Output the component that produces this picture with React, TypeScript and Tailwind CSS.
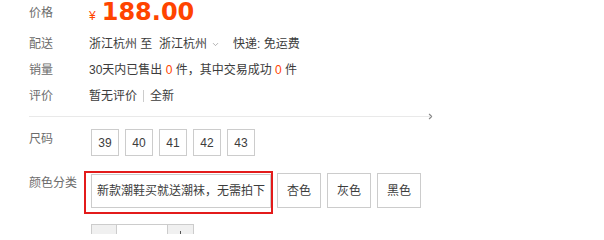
import { ChevronRight, ChevronDown } from "lucide-react"

const font = { fontFamily: '"Liberation Sans", "Noto Sans CJK SC", sans-serif' }

const sizes = ["39", "40", "41", "42", "43"]
const colors = ["杏色", "灰色", "黑色"]

function Label({ children }: { children: React.ReactNode }) {
  return <div className="w-[60px] shrink-0 text-[#6c6c6c]">{children}</div>
}

export default function App() {
  return (
    <div className="h-[234px] w-[604px] overflow-hidden bg-white pl-[29px] text-[12px] text-[#3c3c3c]" style={font}>
      {/* Price */}
      <div className="flex h-[25px] items-center">
        <Label>价格</Label>
        <div className="flex items-baseline text-[#f40]">
          <span className="mr-[6px] text-[12px]">¥</span>
          <span className="text-[24px] font-bold leading-[25px]" style={{ fontFamily: '"DejaVu Sans", sans-serif' }}>
            188.00
          </span>
        </div>
      </div>

      {/* Delivery */}
      <div className="mt-[6px] flex h-[26px] items-center">
        <Label>配送</Label>
        <span className="whitespace-pre">浙江杭州 至  浙江杭州</span>
        <ChevronDown className="ml-[4px] h-[9px] w-[9px] text-[#999]" strokeWidth={2} />
        <span className="ml-[13px]">快递: 免运费</span>
      </div>

      {/* Sales */}
      <div className="flex h-[26px] items-center">
        <Label>销量</Label>
        <span>
          30天内已售出 <span className="text-[#f40]">0</span> 件，其中交易成功 <span className="text-[#f40]">0</span> 件
        </span>
      </div>

      {/* Reviews */}
      <div className="flex h-[26px] items-center">
        <Label>评价</Label>
        <span>暂无评价</span>
        <span className="mx-[6px] h-[12px] w-px bg-[#ccc]" />
        <span>全新</span>
      </div>

      {/* Divider */}
      <div className="relative mt-[7px] h-px w-[401px] bg-[#e9e9e9]">
        <ChevronRight className="absolute -right-[5px] -top-[4px] h-[9px] w-[9px] text-[#888]" strokeWidth={3} />
      </div>

      {/* Size */}
      <div className="mt-[12px] flex items-start">
        <div className="w-[60px] shrink-0 leading-[20px] text-[#6c6c6c]">尺码</div>
        <div className="ml-[2px] flex gap-[6px]">
          {sizes.map((s) => (
            <div key={s} className="flex h-[27px] w-[28px] items-center justify-center border border-[#ccc]">
              {s}
            </div>
          ))}
        </div>
      </div>

      {/* Color */}
      <div className="mt-[17px] flex items-start">
        <div className="w-[60px] shrink-0 leading-[20px] text-[#6c6c6c]">颜色分类</div>
        <div className="ml-[2px] flex gap-[6px]">
          <div className="relative mt-[1px] flex h-[34px] w-[180px] items-center justify-center border border-[#ccc]">
            新款潮鞋买就送潮袜，无需拍下
            <div className="absolute -bottom-[7px] -left-[8px] -right-[3px] -top-[4px] border-2 border-[#e31b1b]" />
          </div>
          {colors.map((c) => (
            <div key={c} className="flex h-[35px] w-[44px] items-center justify-center border border-[#ccc]">
              {c}
            </div>
          ))}
        </div>
      </div>

      {/* Quantity */}
      <div className="mt-[16px] flex items-start">
        <div className="w-[60px] shrink-0" />
        <div className="ml-[2px] flex h-[26px]">
          <div className="flex w-[26px] items-center justify-center border border-[#ccc] bg-[#f0f0f0]" />
          <div className="w-[50px] border-y border-[#ccc] bg-white" />
          <div className="relative w-[27px] border border-[#ccc] bg-[#f0f0f0]">
            <span className="absolute left-[12px] top-[6px] h-[9px] w-px bg-[#555]" />
          </div>
        </div>
      </div>
    </div>
  )
}
